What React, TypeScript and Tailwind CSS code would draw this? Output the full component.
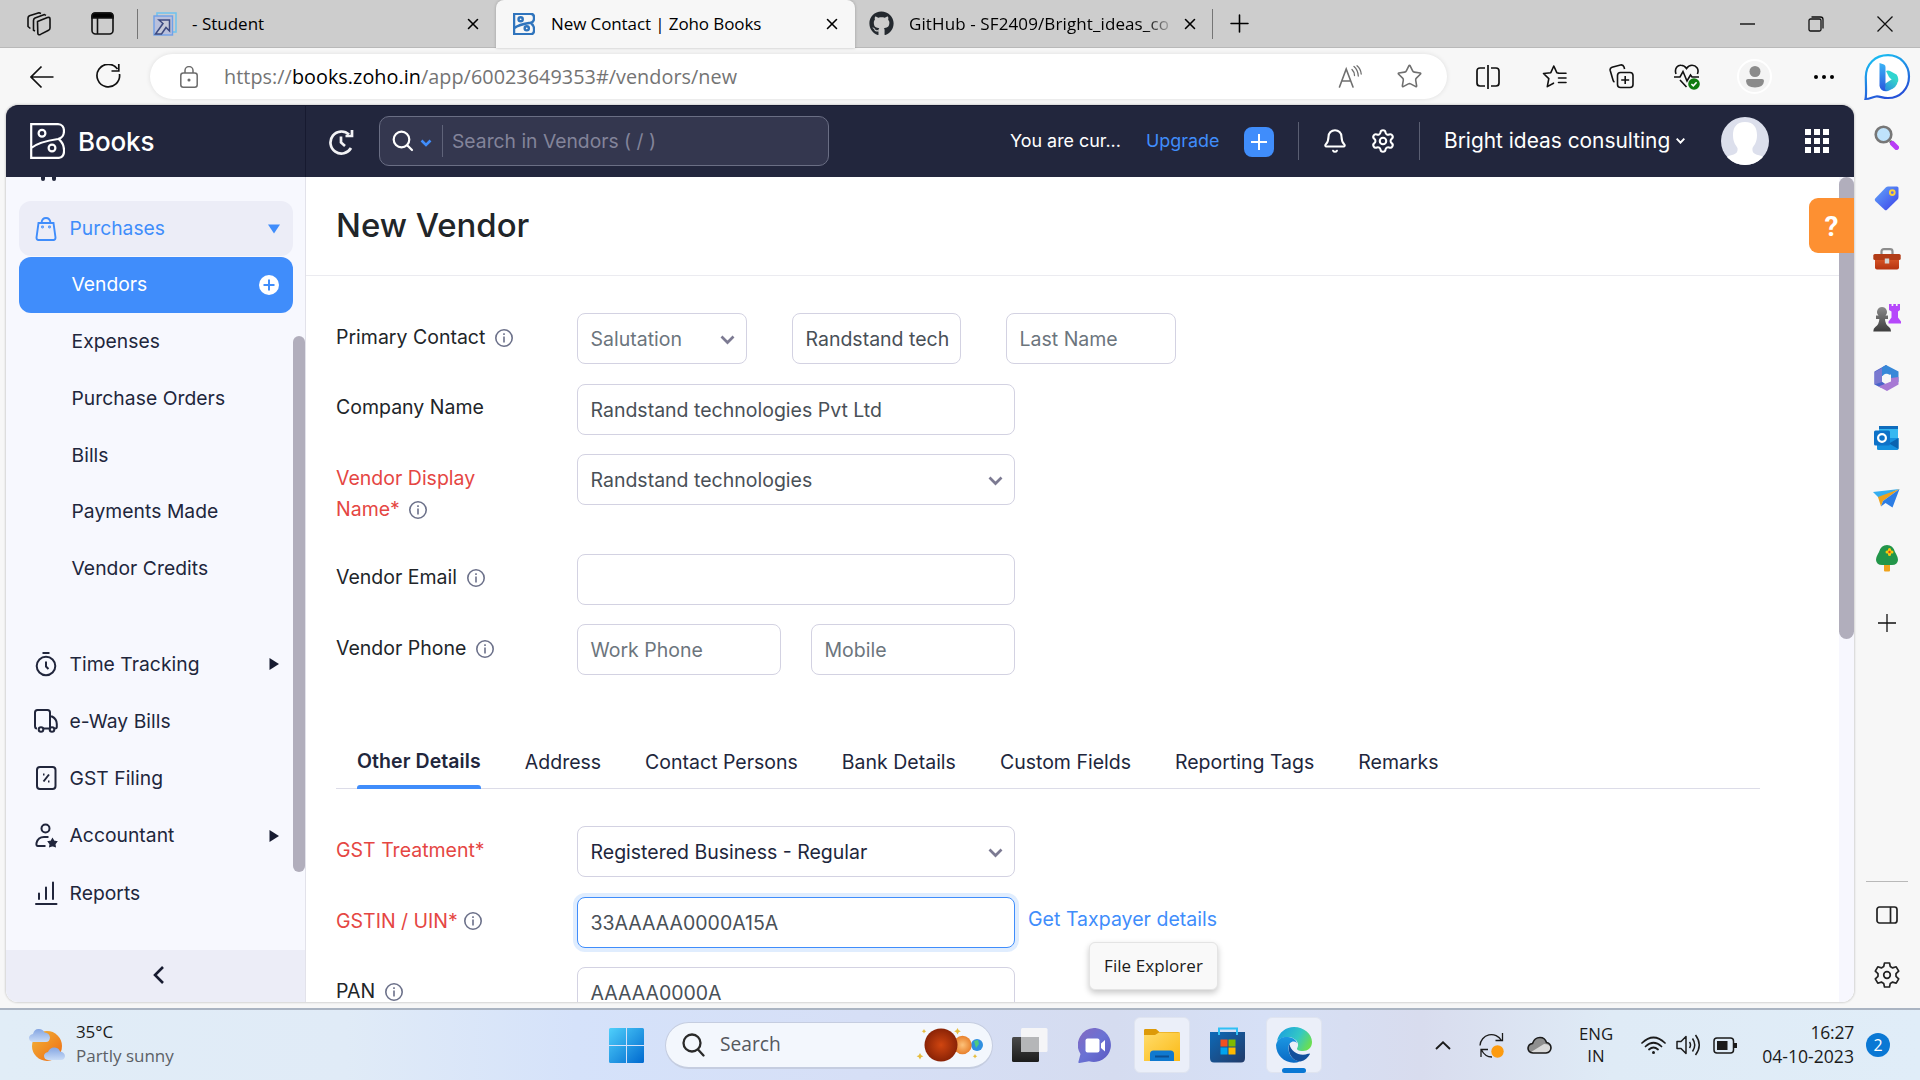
import type { ReactNode } from 'react';
import { Bell, Settings, X, Plus, Star } from 'lucide-react';
import { FaGithub } from 'react-icons/fa';

/* ---------- Browser chrome ---------- */

function TabStrip() {
  return (
    <div className="flex h-12 shrink-0 items-center border-b border-[#b9b9b9] bg-[#cdcdcd] text-[17px] text-black">
      <svg className="ml-[27px] h-6 w-6" viewBox="0 0 24 24" fill="none" stroke="#111" strokeWidth="1.6" strokeLinejoin="round">
        <path d="M10.5 9.5 L20.5 5.5 Q23 4.8 23 7 V16 Q23 17.6 21.6 18.2 L13.5 22.4 Q10.8 23.4 10.8 21 Z" />
        <path d="M8 19 L6.5 18.3 V8.5 Q6.5 6.8 8 6 L17.5 2.6 L19 3.4" />
        <path d="M3.4 16.5 L1 14.5 V6 Q1 4.6 2.4 3.8 L12 .8 L14 1.6" />
      </svg>
      <svg className="ml-[40px] h-[23px] w-[23px]" viewBox="0 0 23 23" fill="none" stroke="#111" strokeWidth="1.6">
        <rect x="1" y="1" width="21" height="21" rx="3.5" />
        <path d="M1 6 V4 Q1 1 4 1 H19 Q22 1 22 4 V6 Z" fill="#000" />
        <path d="M6.5 6 V22" />
      </svg>
      <div className="ml-[23px] h-[30px] w-px bg-[#757575]" />
      <svg className="ml-[15px] h-6 w-6" viewBox="0 0 24 24" fill="none">
        <rect x="4" y="1" width="19" height="19" stroke="#74c4ee" strokeWidth="1.6" />
        <rect x="1" y="4" width="18.5" height="19" fill="#b9c0dc" stroke="#6fa0e8" strokeWidth="1.4" />
        <path d="M6 8 H16.5 V19 L13 15.5 L8.5 22 H2.5 L10 11.5 Z" fill="#c5c9d8" stroke="#3c4a80" strokeWidth="1.5" />
      </svg>
      <div className="ml-[15px] w-[268px]">- Student</div>
      <X className="ml-[4px] size-[18px]" strokeWidth={2.1} />
      <div className="relative ml-[14px] flex h-12 w-[359px] items-center rounded-t-lg bg-[#f7f7f7] shadow-[0_0_3px_rgba(0,0,0,0.25)]">
        <svg className="ml-[17px] h-[22px] w-[22px]" viewBox="0 0 35 36" fill="none" stroke="#2f74bd" strokeWidth="4">
          <BooksMark />
        </svg>
        <div className="ml-[16px] w-[272px] tracking-[-0.1px]">New Contact | Zoho Books</div>
        <X className="size-[18px]" strokeWidth={2.1} />
      </div>
      <FaGithub className="ml-[14px] size-[25px] text-[#24292f]" />
      <div className="ml-[15px] w-[262px] overflow-hidden whitespace-nowrap bg-linear-to-r from-black from-88% to-[#b5b5b5] bg-clip-text tracking-[0.11px] text-transparent">
        GitHub - SF2409/Bright_ideas_co
      </div>
      <X className="ml-[10px] size-[18px]" strokeWidth={2.1} />
      <div className="ml-[13px] h-[30px] w-px bg-[#757575]" />
      <Plus className="ml-[12px] size-[29px]" strokeWidth={1.3} />
      <svg className="ml-[486px] h-4 w-4" viewBox="0 0 16 16" stroke="#000" strokeWidth="1.3"><path d="M0 8 H15" /></svg>
      <svg className="ml-[52px] h-4 w-4" viewBox="0 0 16 16" fill="none" stroke="#111" strokeWidth="1.3">
        <rect x="1" y="3" width="12" height="12" rx="1.5" />
        <path d="M3.5 1 H12.5 Q15 1 15 3.5 V12.5" />
      </svg>
      <svg className="ml-[53px] h-4 w-4" viewBox="0 0 16 16" stroke="#111" strokeWidth="1.3"><path d="M.5 .5 L15.5 15.5 M15.5 .5 L.5 15.5" /></svg>
    </div>
  );
}

function BooksMark() {
  return (
    <>
      <path d="M1.2 25 V1.2 H28 C36 1.2 36 14.5 28 16 C18 17.5 8 19.5 1.2 25 V34.8 H29 C36 34.8 35.5 21.5 29 16.3" />
      <circle cx="12" cy="10.2" r="3.4" />
      <circle cx="22" cy="25" r="3.4" />
    </>
  );
}

function ToolCell({ children }: { children: ReactNode }) {
  return <div className="flex w-[67px] shrink-0 items-center justify-center">{children}</div>;
}

function Toolbar() {
  return (
    <div className="flex h-[57px] shrink-0 items-center">
      <div className="flex w-[84px] shrink-0 justify-center">
        <svg className="h-6 w-6" viewBox="0 0 24 24" fill="none" stroke="#111" strokeWidth="1.7"><path d="M23.5 12 H1 M11.5 1.5 L1 12 L11.5 22.5" /></svg>
      </div>
      <div className="flex w-[49px] shrink-0 justify-center">
        <svg className="h-[25px] w-[25px]" viewBox="0 0 25 25" fill="none" stroke="#111" strokeWidth="1.7"><path d="M23.5 10 A11.3 11.3 0 1 1 21.5 5 M22.8 0 V7 H15.5" /></svg>
      </div>
      <div className="ml-[17px] flex h-[45px] w-[1297px] shrink-0 items-center rounded-full bg-white shadow-[0_0_5px_rgba(0,0,0,0.1)]">
        <svg className="ml-[30px] h-[22px] w-[18px]" viewBox="0 0 18 22" fill="none" stroke="#6b6b6b" strokeWidth="1.5">
          <rect x=".8" y="7" width="16.4" height="14.2" rx="2.5" />
          <path d="M5 7 V4.6 A4 4 0 0 1 13 4.6 V7" />
          <circle cx="9" cy="14" r=".8" fill="#6b6b6b" />
        </svg>
        <div className="ml-[26px] flex-1 whitespace-pre text-[19.8px] tracking-[0.05px] text-[#747474]">
          https://<span className="text-black">books.zoho.in</span>/app/60023649353#/vendors/new
        </div>
        <div className="flex w-[58px] justify-center">
          <svg className="h-[24px] w-[24px]" viewBox="0 0 24 24" fill="none" stroke="#6f6f6f" strokeWidth="1.6" strokeLinecap="round">
            <path d="M1.5 22 L8.2 4 L15 22 M4 16 H12.6" />
            <path d="M14 4.5 Q16.5 7 16.5 10.5 M16 1.5 Q20 5 20.3 11 M19 .8 Q22.8 4 23.2 9" strokeWidth="1.3" />
          </svg>
        </div>
        <div className="mr-[8px] flex w-[60px] justify-center">
          <Star className="size-[27px] text-[#6f6f6f]" strokeWidth={1.4} />
        </div>
      </div>
      <div className="ml-[7px] flex">
        <ToolCell>
          <svg className="h-6 w-6" viewBox="0 0 24 24" fill="none" stroke="#111" strokeWidth="1.7"><path d="M9 3 H4 Q1 3 1 6 V18 Q1 21 4 21 H9 M15 3 H20 Q23 3 23 6 V18 Q23 21 20 21 H15 M12 0 V24" /></svg>
        </ToolCell>
        <ToolCell>
          <svg className="h-[25px] w-[25px]" viewBox="0 0 25 25" fill="none" stroke="#111" strokeWidth="1.6" strokeLinejoin="round" strokeLinecap="round">
            <path d="M16 9 L14.8 8.7 L11.8 2 L8.8 8.7 L1.5 9.5 L6.8 14.6 L5.3 22.6 L11.5 19.2" />
            <path d="M16.5 9.3 H24 M16.5 14 H24 M16.5 18.5 H24" />
          </svg>
        </ToolCell>
        <ToolCell>
          <svg className="h-[25px] w-[25px]" viewBox="0 0 25 25" fill="none" stroke="#111" strokeWidth="1.6">
            <rect x="8.5" y="8.5" width="15.5" height="15" rx="3" />
            <path d="M16.2 12 V20 M12.2 16 H20.2 M5.5 18 Q4.4 17.6 4 16 L1.2 6.5 Q.6 4 3 3.2 L11.5 1 Q14.2 .5 15 3 L15.6 5" />
          </svg>
        </ToolCell>
        <div className="flex w-[63px] shrink-0 items-center justify-center">
          <svg className="h-[26px] w-[26px]" viewBox="0 0 26 26" fill="none" stroke="#111" strokeWidth="1.6">
            <path d="M2 10 C0 4 4 1 7 1.2 Q10.5 1.2 12.5 4.5 Q14.5 1.2 18 1.2 C22 1.2 25.5 5 23.4 10 M6 16 L12.5 23" />
            <path d="M0 13 H6 L9 7.5 L13 17 L16.5 11 L18 13 H25" />
            <circle cx="20" cy="20" r="5.8" fill="#107c10" stroke="none" />
            <path d="M17.4 20 L19.3 21.8 L22.6 18.2" stroke="#fff" />
          </svg>
        </div>
        <div className="flex w-[73px] shrink-0 items-center justify-center">
          <div className="flex size-[35px] items-center justify-center rounded-full border-2 border-white bg-[#f4f4f4]">
            <svg className="h-[22px] w-[18px]" viewBox="0 0 18 22" fill="#8b8b8b"><circle cx="9" cy="5.5" r="5.5" /><path d="M0 15 Q0 13 2 13 H16 Q18 13 18 15 Q17.5 21.5 9 21.5 Q.5 21.5 0 15 Z" /></svg>
          </div>
        </div>
        <div className="flex w-[63px] shrink-0 items-center justify-center gap-[4px] pl-[3px]">
          <div className="size-[4px] rounded-full bg-black" />
          <div className="size-[4px] rounded-full bg-black" />
          <div className="size-[4px] rounded-full bg-black" />
        </div>
      </div>
    </div>
  );
}

function SideCell({ children }: { children: ReactNode }) {
  return <div className="flex h-[60px] shrink-0 items-center justify-center">{children}</div>;
}

function EdgeSidebar() {
  return (
    <div className="flex w-[66px] shrink-0 flex-col pr-px">
      <div className="flex h-[59px] shrink-0 items-start justify-center pt-[5px]">
        <svg className="h-[48px] w-[48px]" viewBox="0 0 48 48" fill="none">
          <defs>
            <linearGradient id="bubble" x1="0" y1="0" x2=".4" y2="1"><stop stopColor="#19c8f4" /><stop offset="1" stopColor="#2552d8" /></linearGradient>
            <linearGradient id="bstem" x1="0" y1="0" x2="0" y2="1"><stop stopColor="#3bb5f7" /><stop offset="1" stopColor="#2a55dc" /></linearGradient>
            <linearGradient id="bbowl" x1="1" y1="0" x2="0" y2="1"><stop stopColor="#35e0c4" /><stop offset="1" stopColor="#2b7be8" /></linearGradient>
          </defs>
          <path d="M2.5 46 C3.5 42 3 38 2.8 24 C3 11 12 2.2 25 2.2 C37.5 2.2 46 12 46 23.5 C46 36 37 45 25 45 C19 45 17 43 13 43.5 C9 44 7 46 2.5 46 Z" fill="#fff" stroke="url(#bubble)" strokeWidth="2.2" />
          <path d="M23 18 Q25 17 27 18 L33.5 21.5 Q36 25 35 29 L28.5 26.5 L26 24 Z" fill="#30d5d0" />
          <path d="M17 34 L28.5 26.5 L35 25 Q35.5 32 30 35.5 L25 38 Q19 39.5 17 34 Z" fill="url(#bbowl)" />
          <path d="M16.5 10 L21 11.5 Q22.5 12 22.5 14 V33 Q21 37 24 38 Q17.5 38 16.5 33 Z" fill="url(#bstem)" />
        </svg>
      </div>
      <SideCell>
        <svg className="h-[25px] w-[25px]" viewBox="0 0 25 25" fill="none">
          <path d="M16 16 L18.5 18.5" stroke="#666" strokeWidth="3" />
          <path d="M18.5 18.5 L22.5 22.5" stroke="#b83cf5" strokeWidth="5" strokeLinecap="round" />
          <circle cx="9.5" cy="9.5" r="7.8" fill="#bfe3fb" stroke="#777" strokeWidth="2.6" />
        </svg>
      </SideCell>
      <SideCell>
        <svg className="mt-[2px] h-[25px] w-[25px]" viewBox="0 0 25 25">
          <defs><linearGradient id="tag" x1="0" y1="0" x2="1" y2="1"><stop stopColor="#63a8fb" /><stop offset="1" stopColor="#3b3fe8" /></linearGradient></defs>
          <path d="M12 1.2 Q13 .5 14 .5 L23 .5 Q24.5 .5 24.5 2 V11 Q24.5 12.5 23.5 13.5 L13 23.8 Q11.8 24.8 10.6 23.8 L1.2 15 Q.2 13.8 1.2 12.5 Z" fill="url(#tag)" />
          <circle cx="18.3" cy="6.6" r="2.4" fill="#5d6cf5" stroke="#fbd13b" strokeWidth="1.9" />
        </svg>
      </SideCell>
      <SideCell>
        <svg className="mt-[3px] h-[22px] w-[28px]" viewBox="0 0 28 22">
          <defs><linearGradient id="box" x1="0" y1="0" x2="0" y2="1"><stop stopColor="#dd5a2a" /><stop offset="1" stopColor="#b5330f" /></linearGradient></defs>
          <path d="M8.5 6 V3.5 Q8.5 1.2 11 1.2 H17 Q19.5 1.2 19.5 3.5 V6" fill="none" stroke="#8d8d8d" strokeWidth="2.2" />
          <rect x="2" y="9" width="24" height="12.5" rx="2" fill="url(#box)" />
          <rect x=".3" y="6" width="27.4" height="6" rx="1.5" fill="#b23c17" />
          <rect x="11.8" y="10.5" width="4.4" height="5" fill="#d4d4d4" />
        </svg>
      </SideCell>
      <SideCell>
        <svg className="mt-[2px] h-[28px] w-[28px]" viewBox="0 0 28 28">
          <defs><linearGradient id="pawn" x1="0" y1="0" x2="0" y2="1"><stop stopColor="#8a8a8a" /><stop offset="1" stopColor="#3d3d3d" /></linearGradient></defs>
          <path d="M16 0 h2.6 v2 h1.7 v-2 h2.6 v2 h1.7 v-2 H27 V6 l-2 1.5 v6 l3 4 v2 H15.5 v-2 l3 -4 v-6 L16 6 Z" fill="#b648fb" />
          <path d="M9 3 a5 5 0 0 1 3.5 8.5 h2.5 v3.5 h-3 q0 5 4 8 q2 1 2 4.5 H.3 q0 -3.5 2 -4.5 q4 -3 4 -8 h-3.3 v-3.5 h2.5 A5 5 0 0 1 9 3 Z" fill="url(#pawn)" />
        </svg>
      </SideCell>
      <SideCell>
        <svg className="mt-[2px] h-[26px] w-[25px]" viewBox="0 0 25 26">
          <path d="M12 0 L.5 6.5 V19.5 L6.5 22.5 L12 19.5 L8 16.8 V9.5 L16 4 Z" fill="#4a63c9" />
          <path d="M.5 7 L8 3 V17 L.5 19.5 Z" fill="#7a79d0" />
          <path d="M12 0 L24.5 6.5 V17 L17 14.5 V9.5 L8 11 V2.5 Z" fill="#3688d8" />
          <path d="M24.5 12 V19.5 L13 26 L4.5 21.5 L17 16.5 L17 13 Z" fill="#a779d4" />
          <circle cx="12.5" cy="13" r="4.3" fill="#f7f7f7" />
        </svg>
      </SideCell>
      <SideCell>
        <svg className="mt-[2px] h-[24px] w-[25px]" viewBox="0 0 25 24">
          <rect x="5" y="0" width="19" height="16" rx="1.5" fill="#35b8f1" />
          <rect x="5" y="0" width="19" height="3" fill="#0f6cbd" />
          <path d="M3 23 V12 H24.5 V22.5 Q24.5 24 23 24 H4.5 Q3 24 3 23 Z" fill="#1490df" />
          <path d="M24.5 12 L15 17.5 L24.5 23 Z" fill="#0a63b0" />
          <rect x="0" y="4.5" width="16" height="15" rx="1.5" fill="#0e72c8" />
          <circle cx="8" cy="12" r="3.9" fill="none" stroke="#fff" strokeWidth="2.2" />
        </svg>
      </SideCell>
      <SideCell>
        <svg className="mt-[2px] h-[19px] w-[27px]" viewBox="0 0 27 19">
          <path d="M0 3 L26.5 0 L6 9 Z" fill="#35aef0" />
          <path d="M26.5 0 L5 8 L8 17.5 L10 12 Z" fill="#eda21c" />
          <path d="M26.5 0 L10 12 L8 17.5 L12.5 14 L19.5 18.5 Z" fill="#2d7de4" />
        </svg>
      </SideCell>
      <SideCell>
        <svg className="mt-[2px] h-[27px] w-[22px]" viewBox="0 0 22 27">
          <rect x="8" y="17" width="6" height="9.5" rx="1" fill="#f0a31c" />
          <path d="M11 0 Q17 0 19 7 Q22 12 22 15 Q21.5 20 16 20 H6 Q.5 20 0 15 Q0 12 3 7 Q5 0 11 0 Z" fill="#23964a" />
          <path d="M13.5 4.5 V9.5 M11 7 H16" stroke="#f9c80e" strokeWidth="3" strokeLinecap="round" />
          <circle cx="13.5" cy="7" r="1.2" fill="#e0431b" />
        </svg>
      </SideCell>
      <div className="mt-px flex h-[70px] shrink-0 items-center justify-center">
        <svg className="h-[18px] w-[18px]" viewBox="0 0 18 18" stroke="#111" strokeWidth="1.3"><path d="M9 0 V18 M0 9 H18" /></svg>
      </div>
      <div className="mx-auto mt-[223px] h-px w-[42px] shrink-0 bg-[#b9b9b9]" />
      <div className="mt-[3px]">
        <SideCell>
          <svg className="h-[18px] w-[22px]" viewBox="0 0 22 18" fill="none" stroke="#222" strokeWidth="1.7"><rect x="1" y="1" width="20" height="16" rx="2.5" /><path d="M14.5 1 V17" /></svg>
        </SideCell>
        <SideCell>
          <svg className="h-[26px] w-[26px]" viewBox="0 0 26 26" fill="none" stroke="#222" strokeWidth="1.7" strokeLinejoin="round">
            <path d="M10.5 1 H15.5 L16.3 4.6 L18.6 5.9 L22.2 4.8 L24.7 9.2 L22 11.7 V14.3 L24.7 16.8 L22.2 21.2 L18.6 20.1 L16.3 21.4 L15.5 25 H10.5 L9.7 21.4 L7.4 20.1 L3.8 21.2 L1.3 16.8 L4 14.3 V11.7 L1.3 9.2 L3.8 4.8 L7.4 5.9 L9.7 4.6 Z" />
            <circle cx="13" cy="13" r="3.3" />
          </svg>
        </SideCell>
      </div>
    </div>
  );
}

/* ---------- Zoho Books ---------- */

function AppHeader() {
  return (
    <header className="flex h-[72px] shrink-0 items-center rounded-t-[12px] border-t border-[#171a30] bg-[#22263d] pb-px text-white">
      <div className="flex h-[72px] w-[300px] items-center border-r border-[#171a30]">
        <svg className="ml-[24px] h-[36px] w-[35px]" viewBox="0 0 35 36" fill="none" stroke="#fff" strokeWidth="2.2"><BooksMark /></svg>
        <div className="ml-[13px] text-[26px] font-medium tracking-[-0.15px]">Books</div>
      </div>
      <svg className="ml-[22px] mt-px h-[26px] w-[26px]" viewBox="0 0 26 26" fill="none" stroke="#f2f2f5" strokeWidth="2.7">
        <path d="M21 5.5 A11 11 0 1 0 23 19" />
        <path d="M17.5 7 H24 V1" />
        <path d="M13 7.5 V13.5 L17 17" />
      </svg>
      <div className="ml-[25px] flex h-[50px] w-[450px] items-center rounded-[10px] border border-[#6a6e84] bg-[#34374f]">
        <svg className="ml-[12px] h-[22px] w-[22px]" viewBox="0 0 22 22" fill="none" stroke="#fff" strokeWidth="2.2" strokeLinecap="round"><circle cx="9.5" cy="9.5" r="7.8" /><path d="M15.5 15.5 L20 20" /></svg>
        <svg className="ml-[6px] mt-[3px] h-[8px] w-[12px]" viewBox="0 0 12 8" fill="none" stroke="#408dfb" strokeWidth="2.6"><path d="M1.5 1.5 L6 6 L10.5 1.5" /></svg>
        <div className="ml-[10px] h-[32px] w-px bg-[#5f6379]" />
        <div className="ml-[9px] text-[19.3px] text-[#83849a]">Search in Vendors ( / )</div>
      </div>
      <div className="ml-[181px] w-[111px] whitespace-nowrap text-[17.9px]">You are cur...</div>
      <div className="ml-[25px] w-[73px] text-[17.9px] text-[#408dfb]">Upgrade</div>
      <div className="ml-[25px] mt-[2px] flex size-[30px] items-center justify-center rounded-[8px] bg-[#408dfb]">
        <svg className="h-4 w-4" viewBox="0 0 16 16" stroke="#fff" strokeWidth="2"><path d="M8 0 V16 M0 8 H16" /></svg>
      </div>
      <div className="ml-[24px] h-[38px] w-px bg-[#5a5e72]" />
      <Bell className="ml-[23px] size-[26px]" strokeWidth={1.9} />
      <Settings className="ml-[22px] size-[26px]" strokeWidth={1.9} />
      <div className="ml-[23px] h-[38px] w-px bg-[#5a5e72]" />
      <div className="ml-[24px] w-[226px] whitespace-nowrap text-[20.9px]">Bright ideas consulting</div>
      <svg className="ml-[6px] h-[6px] w-[9px]" viewBox="0 0 9 6" fill="none" stroke="#fff" strokeWidth="1.9"><path d="M.7 .7 L4.5 4.7 L8.3 .7" /></svg>
      <svg className="ml-[36px] h-[48px] w-[48px] rounded-full" viewBox="0 0 48 48">
        <rect width="48" height="48" fill="#dcdfec" />
        <path d="M24 5 C33 5 36 11 36 18 C36 26 33 28 31.5 31 C31 36 33 37 39 38.5 C43 40 46 42 48 48 H0 C2 42 5 40 9 38.5 C15 37 17 36 16.5 31 C15 28 12 26 12 18 C12 11 15 5 24 5 Z" fill="#fff" />
      </svg>
      <div className="ml-[36px] grid grid-cols-3 gap-[3px]">
        {Array.from({ length: 9 }, (_, i) => <div key={i} className="size-[6px] bg-white" />)}
      </div>
    </header>
  );
}

const purchaseItems = ['Expenses', 'Purchase Orders', 'Bills', 'Payments Made', 'Vendor Credits'];

const modules: { label: string; arrow?: boolean; icon: ReactNode }[] = [
  { label: 'Time Tracking', arrow: true, icon: <><circle cx="12" cy="14" r="9.3" /><path d="M8.5 1 H15.5 M12 9.5 V14.5 L14.5 17" /></> },
  { label: 'e-Way Bills', icon: <><path d="M3 19.5 Q1 19.5 1 17 V3.5 Q1 1 3.5 1 H13.5 Q16 1 16 3.5 V19.5 H9 M16 7.5 H18 Q22.8 10 22.8 15 V18 Q22.8 19.5 20.5 19.5" /><circle cx="7" cy="20.5" r="2.3" /><circle cx="18" cy="20.5" r="2.3" /></> },
  { label: 'GST Filing', icon: <><rect x="3" y="1" width="18.5" height="22" rx="3" /><path d="M15 8.5 L9.5 15.5 M9 8.5 H10.5 M14 15.5 H15.5" /></> },
  { label: 'Accountant', arrow: true, icon: <><circle cx="11.5" cy="5.5" r="4" /><path d="M11.5 23 H4 Q2 23 2.5 20 Q4 14 10 14 H14.5" /><path d="M18.5 16.5 L19.7 18.5 L22 19 L20.5 20.8 L20.8 23 L18.5 22.2 L16.2 23 L16.5 20.8 L15 19 L17.3 18.5 Z" fill="#21263c" /></> },
  { label: 'Reports', icon: <path d="M2 23 H22.5 M5 12.5 V18 M12 6.5 V18 M19 1.5 V18" strokeLinecap="round" /> },
];

function Sidebar() {
  return (
    <aside className="flex w-[300px] shrink-0 flex-col border-r border-[#e2e2ea] bg-[#f7f8fe] text-[19.3px] text-[#21263c]">
      <div className="flex h-[773px]">
        <nav className="w-[287px] pl-[13px]">
          <div className="flex h-[24px] gap-[7px] pl-[22px]">
            <div className="h-[4px] w-[4px] rounded-b-full bg-[#21263c]" />
            <div className="h-[4px] w-[4px] rounded-b-full bg-[#21263c]" />
          </div>
          <div className="flex h-[55px] items-center rounded-[12px] bg-[#ecedf7] text-[#408dfb]">
            <svg className="ml-[15px] h-6 w-6" viewBox="0 0 24 24" fill="none" stroke="#408dfb" strokeWidth="1.9">
              <path d="M4.5 6 H19.5 L21.5 20.5 Q21.5 23 19.5 23 H4.5 Q2.5 23 2.5 20.5 Z M7.5 6 Q8 1 12 1 Q16 1 16.5 6" />
              <circle cx="8.5" cy="10" r=".5" /><circle cx="15.5" cy="10" r=".5" />
            </svg>
            <span className="ml-[11.5px] flex-1">Purchases</span>
            <svg className="mr-[13px] h-[10px] w-[12px]" viewBox="0 0 12 10" fill="#408dfb"><path d="M0 .5 H12 L6 9.5 Z" /></svg>
          </div>
          <div className="mt-[1px] flex h-[56px] items-center justify-between rounded-[12px] bg-[#408dfb] pl-[52.5px] pr-[14px] text-white">
            <span className="pb-[2px]">Vendors</span>
            <svg className="h-5 w-5" viewBox="0 0 20 20"><circle cx="10" cy="10" r="10" fill="#fff" /><path d="M10 4.5 V15.5 M4.5 10 H15.5" stroke="#408dfb" strokeWidth="2" /></svg>
          </div>
          {purchaseItems.map((item) => (
            <div key={item} className="flex h-[56.75px] items-center pl-[52.5px] pt-[0.5px] tracking-[0.05px]">{item}</div>
          ))}
          <div className="mt-[38.5px]">
            {modules.map((m) => (
              <div key={m.label} className="flex h-[57.2px] items-center">
                <svg className="ml-[15px] h-6 w-6 overflow-visible" viewBox="0 0 24 24" fill="none" stroke="#21263c" strokeWidth="2">{m.icon}</svg>
                <span className="ml-[11.5px] flex-1 pt-px tracking-[0.03px]">{m.label}</span>
                {m.arrow && <svg className="mr-[14px] mt-px h-[12px] w-[10px]" viewBox="0 0 10 12" fill="#171b30"><path d="M.5 0 L10 6 L.5 12 Z" /></svg>}
              </div>
            ))}
          </div>
        </nav>
        <div className="mt-[159px] h-[536px] w-[12px] rounded-full bg-[#b1aebc]" />
      </div>
      <div className="flex h-[52px] items-center justify-center rounded-bl-[12px] bg-[#ecedf7] pb-[2px]">
        <svg className="ml-[5px] h-[18px] w-[11px]" viewBox="0 0 11 18" fill="none" stroke="#171b30" strokeWidth="2.6"><path d="M10 1 L2 9 L10 17" /></svg>
      </div>
    </aside>
  );
}

function Info({ near }: { near?: boolean }) {
  return (
    <svg className={near ? 'ml-[6px] inline-block h-[18px] w-[18px] align-[-2px]' : 'ml-[9.5px] inline-block h-[18px] w-[18px] align-[-3px]'} viewBox="0 0 18 18" fill="none" stroke="#6c718a" strokeWidth="1.6">
      <circle cx="9" cy="9" r="8.2" />
      <path d="M9 7.5 V13.5 M9 4.3 V6" />
    </svg>
  );
}

function Row({ label, required, info, near, wrap, className, children }: { label: string; required?: boolean; info?: boolean; near?: boolean; wrap?: boolean; className: string; children: ReactNode }) {
  return (
    <div className={`flex items-start ${className}`}>
      <div className={`w-[241px] pr-[60px] leading-[31px] ${required ? 'text-[#e54643]' : 'text-[#212529]'} ${wrap ? '' : 'whitespace-nowrap'}`}>
        {label}
        {info && <Info near={near} />}
      </div>
      {children}
    </div>
  );
}

function Field({ w, value, placeholder, chevron, dark, focus }: { w: string; value?: string; placeholder?: string; chevron?: boolean; dark?: boolean; focus?: boolean }) {
  const tone = placeholder ? 'text-[#6c757d]' : dark ? 'text-[#21263c]' : 'text-[#495057]';
  const ring = focus ? 'border-[#408dfb] shadow-[0_0_0_4px_rgba(64,141,251,0.16)]' : 'border-[#d3d2e2]';
  return (
    <div className={`flex h-[51px] shrink-0 items-center whitespace-nowrap rounded-[8px] border bg-white px-[12.5px] ${w} ${tone} ${ring}`}>
      <span className="flex-1 pt-[1px] leading-[31px]">{value ?? placeholder}</span>
      {chevron && <svg className="-mr-[1px] mt-[2px] h-[10px] w-[15px]" viewBox="0 0 15 10" fill="none" stroke="#7c7a92" strokeWidth="2.7"><path d="M1.5 1.5 L7.5 7.5 L13.5 1.5" /></svg>}
    </div>
  );
}

const tabs = ['Address', 'Contact Persons', 'Bank Details', 'Custom Fields', 'Reporting Tags', 'Remarks'];

function VendorForm() {
  return (
    <main className="relative flex flex-1 overflow-hidden rounded-br-[12px] bg-white">
      <div className="w-[1533px] text-[19.5px]">
        <div className="flex h-[99px] items-center border-b border-[#ebebf0] pb-[2px] pl-[30px]">
          <h1 className="text-[32.9px] font-medium leading-none text-[#212529]">New Vendor</h1>
        </div>
        <div className="pl-[30px]">
          <Row label="Primary Contact" info className="mt-[37px] *:first:pt-[9px]">
            <div className="flex gap-[45px]">
              <Field w="w-[170px]" placeholder="Salutation" chevron />
              <Field w="w-[169px]" value="Randstand tech" />
              <Field w="w-[170px]" placeholder="Last Name" />
            </div>
          </Row>
          <Row label="Company Name" className="mt-[20px] *:first:pt-[8px]"><Field w="w-[438px]" value="Randstand technologies Pvt Ltd" /></Row>
          <Row label="Vendor Display Name*" required info wrap className="mt-[19px] h-[80px] *:first:pt-[9px]"><Field w="w-[438px]" value="Randstand technologies" chevron /></Row>
          <Row label="Vendor Email" info className="mt-[20px] *:first:pt-[8px]"><Field w="w-[438px]" value="" /></Row>
          <Row label="Vendor Phone" info className="mt-[19px] *:first:pt-[9px]">
            <div className="flex gap-[30px]">
              <Field w="w-[204px]" placeholder="Work Phone" />
              <Field w="w-[204px]" placeholder="Mobile" />
            </div>
          </Row>
          <div className="mt-[60px] flex h-[54px] w-[1424px] gap-[44px] border-b border-[#dcdce8] pl-[21px] text-[#21263c]">
            <div className="relative pt-[11px] font-semibold leading-[31px] tracking-[0.08px]">
              Other Details
              <div className="absolute -bottom-px left-0 h-[4px] w-full rounded-t-[3px] bg-[#408dfb]" />
            </div>
            {tabs.map((t) => <div key={t} className="pt-[12px] leading-[31px]">{t}</div>)}
          </div>
          <Row label="GST Treatment*" required className="mt-[37px] *:first:pt-[9px]"><Field w="w-[438px]" value="Registered Business - Regular" chevron dark /></Row>
          <Row label="GSTIN / UIN*" required info near className="mt-[20px] *:first:pt-[9px]">
            <Field w="w-[438px]" value="33AAAAA0000A15A" focus />
            <div className="ml-[13px] pt-[7px] leading-[31px] tracking-[0.03px] text-[#408dfb]">Get Taxpayer details</div>
          </Row>
          <Row label="PAN" info className="mt-[19px] *:first:pt-[9px]"><Field w="w-[438px]" value="AAAAA0000A" /></Row>
        </div>
      </div>
      <div className="w-[15px] bg-[#f7f7fe]"><div className="h-[462px] w-[15px] rounded-full bg-[#b1aebc]" /></div>
      <div className="absolute right-0 top-[21px] flex h-[55px] w-[45px] items-center justify-center rounded-l-[9px] bg-[#fd9032] pt-[2px] font-[Roboto] text-[28px] font-bold text-white">?</div>
    </main>
  );
}

/* ---------- Windows taskbar ---------- */

function Taskbar() {
  return (
    <div className="flex h-[72px] shrink-0 items-center border-t-[2px] border-[#aab4c2] bg-[linear-gradient(90deg,#e1edf7_0%,#e0ebf7_18%,#d5e2fa_30%,#d6dff6_45%,#d5dcf0_58%,#d6e0f6_66%,#d8dcee_74%,#dfebf6_84%,#e0edf8_100%)] text-[17px] text-[#1b1b1b]">
      <svg className="ml-[28px] h-[36px] w-[37px]" viewBox="0 0 37 36">
        <defs>
          <linearGradient id="sun" x1="0" y1="0" x2="1" y2="1"><stop stopColor="#f2b53a" /><stop offset="1" stopColor="#ee6a12" /></linearGradient>
          <linearGradient id="cloud" x1="0" y1="0" x2="0" y2="1"><stop stopColor="#84a5e2" /><stop offset="1" stopColor="#c9dcf7" /></linearGradient>
        </defs>
        <circle cx="19" cy="19" r="15" fill="url(#sun)" />
        <path d="M4.5 15 Q.8 14 1 10.5 Q1.5 7.5 5 7 Q6.5 1.5 11 2 Q15 2 16.5 5.5 Q21.5 6 22 10.5 Q21.5 15 18 15 Z" fill="url(#cloud)" />
        <path d="M20 33 Q16 32.5 16 28.5 Q16.5 25.5 20 25 Q22 20 27 20.5 Q31 21 32 24.5 Q36.5 25 37 29 Q36.5 33 33 33 Z" fill="url(#cloud)" />
      </svg>
      <div className="ml-[11px] w-[533px] pb-[2px] leading-[24px]">
        <div className="tracking-[-0.1px]">35°C</div>
        <div className="text-[#5c6066]">Partly sunny</div>
      </div>
      <svg className="h-[35px] w-[35px]" viewBox="0 0 35 35">
        <defs><linearGradient id="win" gradientUnits="userSpaceOnUse" x1="0" y1="0" x2="35" y2="35"><stop stopColor="#4fd0fb" /><stop offset="1" stopColor="#0069cf" /></linearGradient></defs>
        <path d="M1.5 0 H17 V17 H0 V1.5 Q0 0 1.5 0 Z M18 0 H33.5 Q35 0 35 1.5 V17 H18 Z M0 18 H17 V35 H1.5 Q0 35 0 33.5 Z M18 18 H35 V33.5 Q35 35 33.5 35 H18 Z" fill="url(#win)" />
      </svg>
      <div className="ml-[21px] flex h-[47px] w-[328px] items-center rounded-full border border-b-2 border-[#c5cde0] bg-[#f3f7fd]">
        <svg className="ml-[16px] h-[24px] w-[23px]" viewBox="0 0 23 24" fill="none" stroke="#2a2a2a" strokeWidth="2.3" strokeLinecap="round"><circle cx="10" cy="10" r="8.5" /><path d="M16 16.5 L21.5 22.5" /></svg>
        <div className="ml-[15px] flex-1 text-[19.2px] text-[#55585e]">Search</div>
        <svg className="mr-[8px] h-[38px] w-[68px]" viewBox="0 0 68 38">
          <defs><radialGradient id="mars"><stop stopColor="#d04510" /><stop offset="1" stopColor="#8a2306" /></radialGradient><radialGradient id="venus"><stop stopColor="#fdc27a" /><stop offset="1" stopColor="#e8802c" /></radialGradient></defs>
          <circle cx="61" cy="19" r="6" fill="#2f8fe0" /><path d="M58 15 L62 14 L63 18 L60 22 Z" fill="#4fc97e" />
          <circle cx="46.5" cy="19" r="9.2" fill="url(#venus)" />
          <circle cx="25" cy="19" r="16.5" fill="url(#mars)" />
          <path d="M41.5 2 l1.2 2.2 2.2 1 -2.2 1 -1.2 2.2 -1.2 -2.2 -2.2 -1 2.2 -1 Z M8 3 l.8 1.5 1.5 .8 -1.5 .8 -.8 1.5 -.8 -1.5 -1.5 -.8 1.5 -.8 Z M4 27 l1.2 2.2 2.2 1 -2.2 1 -1.2 2.2 -1.2 -2.2 -2.2 -1 2.2 -1 Z M59 28 l.8 1.5 1.5 .8 -1.5 .8 -.8 1.5 -.8 -1.5 -1.5 -.8 1.5 -.8 Z" fill="#e6bd3e" />
        </svg>
      </div>
      <svg className="ml-[19px] h-[36px] w-[36px]" viewBox="0 0 36 36">
        <defs><linearGradient id="tv" x1="0" y1="0" x2="0" y2="1"><stop stopColor="#4a4a4a" /><stop offset="1" stopColor="#1c1c1c" /></linearGradient></defs>
        <rect x="0" y="10" width="27" height="25" rx="1.5" fill="url(#tv)" />
        <rect x="9" y="1" width="26.5" height="24" rx="1.5" fill="#f5f5f7" />
        <rect x="9" y="10" width="18" height="15" fill="#b5b6b8" />
      </svg>
      <svg className="ml-[30px] h-[35px] w-[35px]" viewBox="0 0 35 35">
        <defs><linearGradient id="chat" x1="0" y1="0" x2="1" y2="1"><stop stopColor="#8568c0" /><stop offset=".5" stopColor="#6a72d4" /><stop offset="1" stopColor="#5b57c0" /></linearGradient></defs>
        <path d="M17.5 0 A17 17 0 1 1 11 33.2 L1.5 35 Q0 35 .5 33.5 L2.5 26 A17 17 0 0 1 17.5 0 Z" fill="url(#chat)" />
        <rect x="7.5" y="10.5" width="14" height="14" rx="2" fill="#fff" />
        <path d="M23 15.5 L27 12 V23.5 L23 20 Z" fill="#fff" />
      </svg>
      <div className="ml-[21px] flex h-[56px] w-[56px] items-center justify-center rounded-[6px] border border-[#dfe4f0] bg-[#ebeff9]">
        <svg className="h-[34px] w-[36px]" viewBox="0 0 36 34">
          <defs><linearGradient id="fold" x1="0" y1="0" x2="1" y2="1"><stop stopColor="#ffdc6b" /><stop offset="1" stopColor="#fbba16" /></linearGradient></defs>
          <path d="M0 2 Q0 1 1.5 1 H12 L15.5 4 H34 Q36 4 36 6 V12 H0 Z" fill="#dd9a08" />
          <path d="M0 7 H11 L15 4.5 H36 V33 H0 Z" fill="url(#fold)" />
          <path d="M6 33 V26 Q6 22.5 9.5 22.5 H26.5 Q30 22.5 30 26 V33 Z" fill="#0f79cf" />
          <path d="M11 28.5 H25" stroke="#0a4f93" strokeWidth="2" />
        </svg>
      </div>
      <svg className="ml-[20px] h-[36px] w-[36px]" viewBox="0 0 36 36">
        <defs><linearGradient id="store" x1="0" y1="0" x2="1" y2="1"><stop stopColor="#0d6ab8" /><stop offset="1" stopColor="#223a68" /></linearGradient></defs>
        <path d="M0 5 H35 V31 Q35 35.5 31 35.5 H4 Q0 35.5 0 31 Z" fill="url(#store)" />
        <path d="M9 8 V1.5 H27 V8" fill="none" stroke="#2fc0f5" strokeWidth="2" />
        <rect x="10.5" y="12.5" width="7" height="7" fill="#f25022" /><rect x="18.5" y="12.5" width="7" height="7" fill="#7fba00" />
        <rect x="10.5" y="20.5" width="7" height="7" fill="#00a4ef" /><rect x="18.5" y="20.5" width="7" height="7" fill="#ffb900" />
      </svg>
      <div className="relative ml-[20px] flex h-[56px] w-[56px] items-center justify-center rounded-[6px] border border-[#dfe4f0] bg-[#ebeff9]">
        <svg className="h-[36px] w-[36px]" viewBox="0 0 36 36">
          <defs>
            <linearGradient id="e1" x1="0" y1=".2" x2="1" y2=".6"><stop stopColor="#1a9fe0" /><stop offset=".6" stopColor="#34c8c4" /><stop offset="1" stopColor="#6ade52" /></linearGradient>
            <linearGradient id="e2" x1="0" y1="0" x2="0" y2="1"><stop stopColor="#1b97e2" /><stop offset="1" stopColor="#0a69c4" /></linearGradient>
          </defs>
          <path d="M1 14 C3 5 10 0 18 0 C28 0 36 7 36 15 C36 21 31.5 24 27 24 C22 24 20 22.5 21.5 20.5 C24 16 19 10 12 10 C7 10 3 12 1 14 Z" fill="url(#e1)" />
          <path d="M0 18 C1 12 6 9.5 12 10 C17 10.5 20 13 21 16 C17 12.5 12 16 12.5 22 C13 29 18 34 24 34.5 C12 39 0 30 0 18 Z" fill="url(#e2)" />
          <path d="M13.5 17 C11 22 14 34 24.5 34.5 C29 33.5 32 30.5 34 27 C34 26 33 26.5 32 26.8 C24 29.5 15 25.5 13.5 17 Z" fill="#124f9c" />
        </svg>
        <div className="absolute bottom-[-1px] left-[15px] h-[5px] w-[24px] rounded-full bg-[#0a78d4]" />
      </div>
      <svg className="ml-[113px] h-[9px] w-[16px]" viewBox="0 0 16 9" fill="none" stroke="#1b1b1b" strokeWidth="1.9"><path d="M1 8 L8 1.3 L15 8" /></svg>
      <svg className="ml-[28px] h-[26px] w-[25px]" viewBox="0 0 25 26" fill="none" stroke="#1b1b1b" strokeWidth="1.3">
        <path d="M1 13.5 A11.5 11.5 0 0 1 22.5 8.5 M23.5 1 V8.5 H16.5 M13 25 Q6 25 2.5 18 M2 25 V17.5 H9" />
        <circle cx="18.5" cy="19.5" r="6.2" fill="#fd9b0f" stroke="none" />
      </svg>
      <svg className="ml-[23px] h-[18px] w-[25px]" viewBox="0 0 25 18">
        <path d="M6 17 Q1 16.5 1 12 Q1.5 8 5.5 7.5 Q7.5 1.5 13 1.5 Q18 1.5 19.5 6.5 Q24 7.5 24 12 Q23.5 16.5 19 17 Z" fill="#8f8f8f" />
        <path d="M4 16 L17 8 Q23.5 8 23.5 12.5 Q23 16.5 19 17 H6 Z" fill="#d9d9d9" />
        <path d="M6 17 Q1 16.5 1 12 Q1.5 8 5.5 7.5 Q7.5 1.5 13 1.5 Q18 1.5 19.5 6.5 Q24 7.5 24 12 Q23.5 16.5 19 17 Z" fill="none" stroke="#1b1b1b" strokeWidth="1.6" />
      </svg>
      <div className="ml-[27px] w-[34px] text-center text-[16.8px] leading-[22.5px]">
        <div>ENG</div>
        <div>IN</div>
      </div>
      <svg className="ml-[28px] h-[19px] w-[25px]" viewBox="0 0 25 19" fill="none" stroke="#1b1b1b" strokeWidth="1.7" strokeLinecap="round">
        <path d="M1 7 Q12.5 -4 24 7 M4.5 10.5 Q12.5 3 20.5 10.5 M8 13.5 Q12.5 9.5 17 13.5" />
        <circle cx="12.5" cy="16.5" r="1.5" fill="#1b1b1b" stroke="none" />
      </svg>
      <svg className="ml-[10px] h-[22px] w-[25px]" viewBox="0 0 25 22" fill="none" stroke="#1b1b1b" strokeWidth="1.5" strokeLinejoin="round">
        <path d="M1 7.5 H5 L10 2.5 V19.5 L5 14.5 H1 Z M13.5 8 Q15.5 11 13.5 14 M16.5 4.5 Q21 11 16.5 17.5 M19.5 1 Q27 11 19.5 21" />
      </svg>
      <svg className="ml-[12px] h-[17px] w-[25px]" viewBox="0 0 25 17" fill="none" stroke="#1b1b1b" strokeWidth="1.5">
        <rect x="1" y="1" width="19.5" height="15" rx="3" /><rect x="4" y="4" width="10.5" height="9" fill="#1b1b1b" stroke="none" /><path d="M22.5 6 V11" strokeWidth="3" />
      </svg>
      <div className="ml-[16px] w-[100px] pb-[2px] text-right leading-[24px]">
        <div className="text-[17.5px] tracking-[-0.2px]">16:27</div>
        <div className="text-[17.6px]">04-10-2023</div>
      </div>
      <div className="ml-[12px] flex size-[24px] items-center justify-center rounded-full bg-[#0a78d4] text-[16px] text-white">2</div>
    </div>
  );
}

export default function App() {
  return (
    <div className="relative flex h-[1080px] w-[1920px] flex-col overflow-hidden bg-[#f7f7f7] font-['Open_Sans',sans-serif]">
      <TabStrip />
      <div className="flex h-[960px] shrink-0">
        <div className="flex w-[1854px] shrink-0 flex-col">
          <Toolbar />
          <div className="ml-[6px] flex h-[897px] shrink-0 flex-col rounded-[12px] font-[Inter,sans-serif] shadow-[0_0_2px_1px_rgba(0,0,0,0.14)]">
            <AppHeader />
            <div className="flex h-[825px] overflow-hidden rounded-b-[12px]">
              <Sidebar />
              <VendorForm />
            </div>
          </div>
        </div>
        <EdgeSidebar />
      </div>
      <Taskbar />
      <div className="absolute left-[1089px] top-[942px] flex h-[48px] w-[129px] items-center justify-center rounded-[6px] border border-[#e4e4e4] bg-[#f9f9f9] text-[17px] tracking-[0.07px] text-[#1b1b1b] shadow-[0_3px_6px_rgba(0,0,0,0.22)]">
        File Explorer
      </div>
    </div>
  );
}
